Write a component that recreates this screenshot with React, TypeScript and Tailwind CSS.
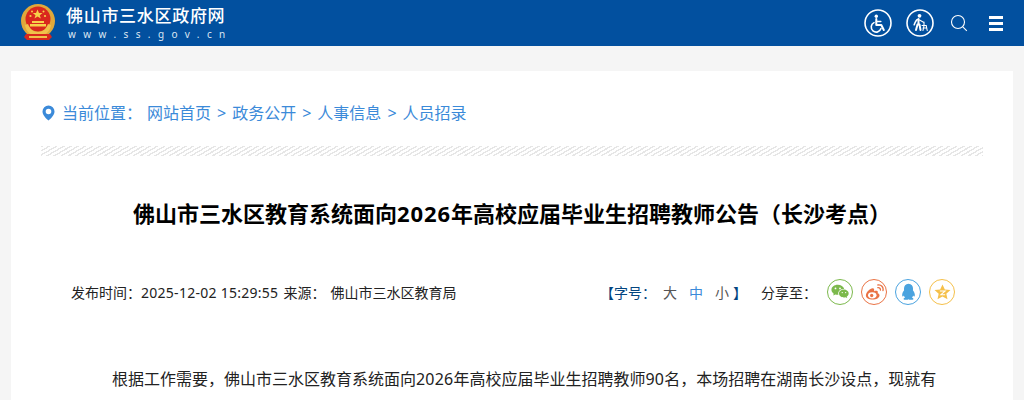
const sans = "font-['Noto_Sans','Noto_Sans_CJK_SC',sans-serif]";

function Emblem() {
  return (
    <svg width="36" height="40" viewBox="0 0 36 40">
      <circle cx="18" cy="18" r="17" fill="#e0a83a" />
      <circle cx="18" cy="16" r="12.5" fill="#d9281e" />
      <path d="M5 22c1 7 6 11 13 11s12-4 13-11l-3-1c-2 5-5 8-10 8s-8-3-10-8z" fill="#f0c24a" />
      <polygon points="17.5,6.5 19,10 22.5,10 19.8,12.2 20.8,15.5 17.5,13.6 14.5,15.5 15.5,12.2 12.8,10 16,10" fill="#f7d24a" />
      <circle cx="10.5" cy="13" r="1.1" fill="#f7d24a" />
      <circle cx="25" cy="13" r="1.1" fill="#f7d24a" />
      <circle cx="12" cy="8.5" r="1" fill="#f7d24a" />
      <circle cx="23.5" cy="8.5" r="1" fill="#f7d24a" />
      <rect x="12" y="18" width="12" height="2" fill="#f7d24a" />
      <rect x="10" y="21" width="16" height="2.5" fill="#f7d24a" />
      <path d="M6 31h24l2 3-3 3H7l-3-3z" fill="#d9281e" />
      <path d="M9 33h18v2H9z" fill="#f0c24a" />
    </svg>
  );
}

function WheelchairIcon() {
  return (
    <svg width="28" height="28" viewBox="0 0 28 28" fill="none" stroke="#fff">
      <circle cx="14" cy="14" r="13" strokeWidth="1.6" />
      <circle cx="12.3" cy="7.2" r="1.7" fill="#fff" stroke="none" />
      <path d="M12.3 10v6h5l2.5 5" strokeWidth="2" strokeLinecap="round" strokeLinejoin="round" />
      <path d="M12.3 12.5h4.5" strokeWidth="1.6" strokeLinecap="round" />
      <path d="M10 13.6a5 5 0 1 0 7 6" strokeWidth="1.6" strokeLinecap="round" />
    </svg>
  );
}

function ElderIcon() {
  return (
    <svg width="28" height="28" viewBox="0 0 28 28" fill="none" stroke="#fff">
      <circle cx="14" cy="14" r="13" strokeWidth="1.6" />
      <circle cx="13.500" cy="6.800" r="1.900" fill="#fff" stroke="none" />
      <path d="M11.500 10.500c-1.500.5-2.300 2.500-3.300 5.200" strokeWidth="1.600" strokeLinecap="round" />
      <path d="M12.500 10v5.500M11.500 15.500l-1.500 5.500M13.500 15.500l1 5.500" strokeWidth="2" strokeLinecap="round" strokeLinejoin="round" />
      <path d="M13.500 11l4.500 2.500M18 13v3.500M16 16.500h4.200l1 5M18 16.500l-1 5M17 19h3.500" strokeWidth="1.100" strokeLinecap="round" />
    </svg>
  );
}

function WechatIcon() {
  return (
    <svg width="18" height="16" viewBox="0 0 16 14" fill="#7cb94c">
      <path d="M6 0.500C2.800.500.400 2.500.400 5c0 1.400.800 2.600 2 3.500L2 10.200l1.900-1c.700.200 1.400.300 2.100.300.200 0 .400 0 .600 0-.100-.400-.200-.700-.200-1.100 0-2.300 2.200-4.100 4.900-4.100h.400C11.200 2 8.800.500 6 .500z" />
      <path d="M15.700 8.300c0-2-2-3.500-4.300-3.500S7.100 6.300 7.100 8.300s2 3.500 4.300 3.500c.500 0 1-.100 1.500-.200l1.500.800-.400-1.300c1-.700 1.700-1.700 1.700-2.800z" />
      <circle cx="4" cy="3.800" r=".8" fill="#fff" />
      <circle cx="8" cy="3.800" r=".8" fill="#fff" />
      <circle cx="10" cy="7.500" r=".6" fill="#fff" />
      <circle cx="13" cy="7.500" r=".6" fill="#fff" />
    </svg>
  );
}

function WeiboIcon() {
  return (
    <svg width="19" height="17" viewBox="0 0 17 15" fill="none" stroke="#ea7345">
      <path d="M6.800 13.800c-3.200 0-6-1.500-6-3.700 0-2.500 3.700-6.300 6-6.300 1.500 0 1.600 1.200 1.300 2.500 1.500-.600 3.400-.700 3.400.800 0 .400-.100.700-.200 1 1 .300 1.700.900 1.700 2 0 2-2.900 3.700-6.200 3.700z" fill="#ea7345" stroke="none" />
      <ellipse cx="6.500" cy="10" rx="3.800" ry="2.800" fill="#fff" stroke="none" />
      <circle cx="6" cy="10.200" r="1.500" fill="#ea7345" stroke="none" />
      <path d="M11.500 3.200c1.400-.300 2.500.700 2.300 2.200" strokeWidth="1.200" strokeLinecap="round" />
      <path d="M11.500 .800c3-.500 5.200 1.800 4.600 4.900" strokeWidth="1.200" strokeLinecap="round" />
    </svg>
  );
}

function QQIcon() {
  return (
    <svg width="15" height="18" viewBox="0 0 14 16" fill="#4aa3df">
      <path d="M7 .300C4.200.300 2.800 2.300 2.800 4.800c0 .600 0 1.100.100 1.500C2 7.500 1.200 9 1.100 10.300c-.100 1.300.300 1.900.600 1.900.300 0 .700-.400 1-1 .200.800.600 1.500 1.200 2-.800.300-1.500.800-1.500 1.300 0 .600 1.300.800 2.600.800 1 0 1.600-.200 2-.500.400.300 1 .500 2 .500 1.300 0 2.600-.200 2.600-.800 0-.500-.700-1-1.500-1.300.600-.500 1-1.200 1.200-2 .300.600.700 1 1 1 .300 0 .700-.600.600-1.900-.100-1.300-.900-2.800-1.800-4 .100-.400.100-.900.100-1.500C11.200 2.300 9.800.300 7 .300z" />
    </svg>
  );
}

function StarIcon() {
  return (
    <svg width="17" height="16" viewBox="0 0 16 15">
      <path d="M8 .500l2.200 4.600 5.300.600-3.900 3.500 1.100 5.200L8 11.800l-4.700 2.600 1.100-5.200L.500 5.700l5.300-.600z" fill="#f5c04a" />
      <path d="M5.500 6.500h5L6.500 10h4" fill="none" stroke="#fff" strokeWidth="1" />
    </svg>
  );
}

function Share({ color, children }: { color: string; children: React.ReactNode }) {
  return (
    <span className={`flex h-[26px] w-[26px] items-center justify-center rounded-full border ${color}`}>
      {children}
    </span>
  );
}

export default function App() {
  return (
    <div className={`h-[400px] w-[1024px] overflow-hidden bg-[#f5f5f5] ${sans}`}>
      <header className="flex h-[46px] items-center justify-between bg-[#02509f] pl-[20px] pr-[21px]">
        <div className="flex items-center gap-[10px]">
          <Emblem />
          <div className="text-white">
            <div className="mt-[-1px] text-[17px] leading-[20px] font-medium tracking-[0.7px]">佛山市三水区政府网</div>
            <div className="mt-[2px] ml-[2px] text-[10px] leading-[12px] tracking-[7.4px] text-[#dbe6f2]">www.ss.gov.cn</div>
          </div>
        </div>
        <div className="flex items-center">
          <WheelchairIcon />
          <span className="ml-[14px]"><ElderIcon /></span>
          <svg className="ml-[16px]" width="18" height="18" viewBox="0 0 18 18" fill="none" stroke="#fff" strokeWidth="1.100">
            <circle cx="8" cy="8" r="6.500" />
            <path d="M12.800 12.800l4 4" />
          </svg>
          <span className="ml-[21px] flex w-[14px] flex-col gap-[3px]">
            <span className="h-[3px] bg-white" />
            <span className="h-[3px] bg-white" />
            <span className="h-[3px] bg-white" />
          </span>
        </div>
      </header>

      <main className="mx-[11px] mt-[25px] h-[329px] bg-white px-[30px]">
        <nav className="flex h-[75px] items-center pt-[8px] text-[16px] leading-[24px] text-[#3b8ad9]">
          <svg className="ml-[1px]" width="13" height="16" viewBox="0 0 13 16">
            <path fillRule="evenodd" d="M6.500.500a6 6 0 0 0-6 6c0 3.700 4 7.400 6 9 2-1.600 6-5.300 6-9a6 6 0 0 0-6-6zm0 3.200a2.800 2.800 0 1 1 0 5.600 2.800 2.800 0 0 1 0-5.600z" fill="#3b8ad9" />
          </svg>
          <span className="ml-[7px]">当前位置：</span>
          <span className="ml-[5px]">网站首页</span>
          <span className="mx-[6px]">&gt;</span>
          <span>政务公开</span>
          <span className="mx-[6px]">&gt;</span>
          <span>人事信息</span>
          <span className="mx-[6px]">&gt;</span>
          <span>人员招录</span>
        </nav>

        <div className="h-[10px] bg-[repeating-linear-gradient(150deg,#e6e6e6_0px,#e6e6e6_1.4px,#ffffff_1.4px,#ffffff_3.6px)]" />

        <h1 className="mt-[39px] text-center text-[22px] leading-[36px] font-bold text-black">
          佛山市三水区教育系统面向<span className="tracking-[0.9px]">2026</span>年高校应届毕业生招聘教师公告（长沙考点）
        </h1>

        <div className="mt-[47px] flex h-[28px] items-center text-[14px] text-[#222222]">
          <span className="ml-[30px]">发布时间：<span className="tracking-[0.27px]">2025-12-02 15:29:55</span></span>
          <span className="ml-[5px]">来源：</span>
          <span className="ml-[5px]">佛山市三水区教育局</span>
          <span className="ml-auto text-[#03457f]">【字号：</span>
          <span className="ml-[7px] text-[#555555]">大</span>
          <span className="ml-[12px] text-[#3b8ad9]">中</span>
          <span className="ml-[12px] text-[#555555]">小</span>
          <span className="ml-[4px] w-[14px] text-[#03457f]">】</span>
          <span className="ml-[14px]">分享至：</span>
          <span className="ml-[10px] mr-[28px] flex gap-[8px]">
            <Share color="border-[#7cb94c]"><WechatIcon /></Share>
            <Share color="border-[#ea7345]"><WeiboIcon /></Share>
            <Share color="border-[#4aa3df]"><QQIcon /></Share>
            <Share color="border-[#f5c04a]"><StarIcon /></Share>
          </span>
        </div>

        <p className="mt-[58px] ml-[40px] w-[880px] indent-[31px] text-[16px] leading-[30px] whitespace-nowrap text-[#222222]">
          根据工作需要，佛山市三水区教育系统面向<span className="tracking-[0.2px]">2026</span>年高校应届毕业生招聘教师<span className="tracking-[0.2px]">90</span>名，本场招聘在湖南长沙设点，现就有
        </p>
      </main>
    </div>
  );
}
